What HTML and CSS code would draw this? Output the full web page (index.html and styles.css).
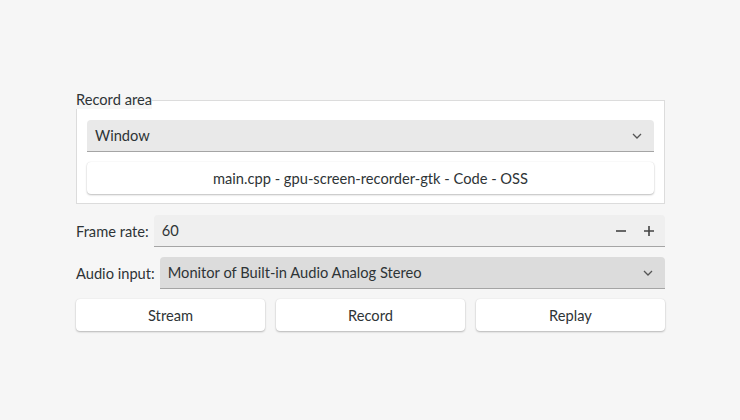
FILE: index.html
```html
<!DOCTYPE html>
<html>
<head>
<meta charset="utf-8">
<link rel="stylesheet" href="styles.css">
</head>
<body>
<main class="app">
  <fieldset class="frame">
    <legend class="frame-label">Record area</legend>
    <div class="combo combo-light">
      <span class="combo-text">Window</span>
      <svg class="chevron" width="10" height="6" viewBox="0 0 10 6"><path d="M1 1 L5 5 L9 1" fill="none" stroke="#555" stroke-width="1.3"/></svg>
    </div>
    <button class="btn btn-wide">main.cpp - gpu-screen-recorder-gtk - Code - OSS</button>
  </fieldset>

  <div class="row">
    <span class="row-label">Frame rate:</span>
    <div class="spin">
      <span class="spin-value">60</span>
      <span class="spin-btns">
        <svg width="12" height="12" viewBox="0 0 12 12"><path d="M1 6 H11" stroke="#444" stroke-width="1.6"/></svg>
        <svg width="12" height="12" viewBox="0 0 12 12"><path d="M1 6 H11 M6 1 V11" stroke="#444" stroke-width="1.6"/></svg>
      </span>
    </div>
  </div>

  <div class="row">
    <span class="row-label">Audio input:</span>
    <div class="combo combo-dark">
      <span class="combo-text">Monitor of Built-in Audio Analog Stereo</span>
      <svg class="chevron" width="10" height="6" viewBox="0 0 10 6"><path d="M1 1 L5 5 L9 1" fill="none" stroke="#555" stroke-width="1.3"/></svg>
    </div>
  </div>

  <div class="actions">
    <button class="btn">Stream</button>
    <button class="btn">Record</button>
    <button class="btn">Replay</button>
  </div>
</main>
</body>
</html>
```

FILE: styles.css
```css
html, body {
  margin: 0;
  padding: 0;
  background: #f6f6f6;
  width: 740px;
  height: 420px;
  overflow: hidden;
}

body {
  font-family: Lato, "Noto Sans", sans-serif;
  font-size: 14.67px;
  color: #2e3436;
}

.app {
  width: 589px;
  margin-left: 76px;
  padding-top: 91px;
  display: flex;
  flex-direction: column;
  gap: 10px;
}

.frame {
  margin: 0 0 1px 0;
  border: 1px solid #dcdcdc;
  background: #ffffff;
  padding: 11px 10px 9px 10px;
  display: flex;
  flex-direction: column;
  gap: 10px;
  min-width: 0;
}

.frame-label {
  padding: 0;
  margin-left: -11px;
  line-height: 18px;
  background: #f6f6f6;
}

.combo {
  height: 32px;
  box-sizing: border-box;
  border-radius: 4px 4px 0 0;
  border-bottom: 1px solid #a5a5a5;
  display: flex;
  align-items: center;
  justify-content: space-between;
  padding: 0 12px 0 8px;
}

.combo-light {
  background: #e9e9e9;
}

.combo-dark {
  flex: 1;
  background: #dcdcdc;
}

.chevron {
  display: block;
}

.btn {
  font-family: inherit;
  font-size: 14.67px;
  color: #2e3436;
  background: #ffffff;
  border: none;
  border-radius: 4px;
  height: 32px;
  box-shadow: 0 1px 2px rgba(0, 0, 0, 0.25), 0 0 1px rgba(0, 0, 0, 0.12);
  padding: 0;
}

.btn-wide {
  width: 100%;
}

.row {
  display: flex;
  align-items: center;
  gap: 5px;
}

.row-label {
  white-space: nowrap;
}

.spin {
  flex: 1;
  height: 32px;
  box-sizing: border-box;
  background: #efefef;
  border-bottom: 1px solid #a5a5a5;
  border-radius: 4px 4px 0 0;
  display: flex;
  align-items: center;
  justify-content: space-between;
  padding: 0 10px 0 8px;
}

.spin-btns {
  display: flex;
  gap: 16px;
}

.spin-btns svg {
  display: block;
}

.actions {
  display: grid;
  grid-template-columns: 1fr 1fr 1fr;
  gap: 11px;
}
```
